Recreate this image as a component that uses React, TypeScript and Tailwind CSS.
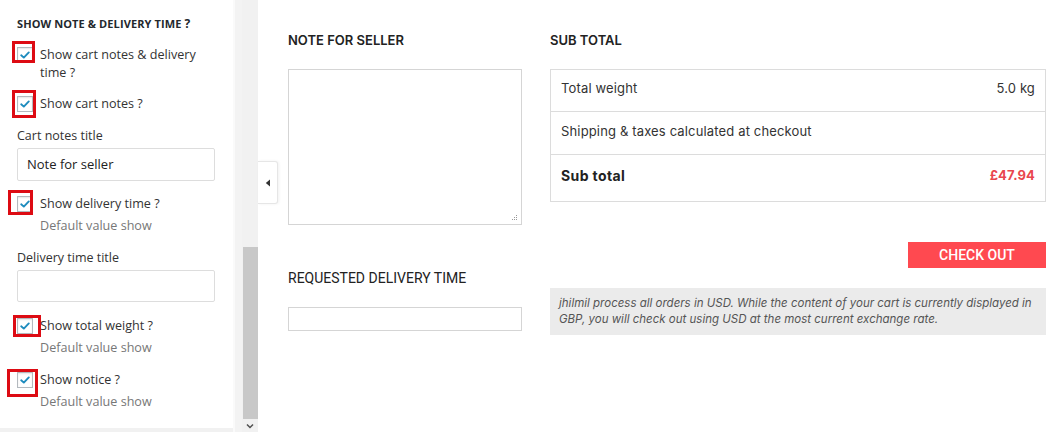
import React from "react";

function Check() {
  return (
    <span className="flex h-[16px] w-[16px] shrink-0 items-center justify-center border border-[#b4b9be] bg-white shadow-[inset_0_1px_2px_rgba(0,0,0,0.1)]">
      <svg width="12" height="12" viewBox="0 0 12 12">
        <path d="M2.2 6.3 L4.8 8.6 L9.8 3.4" fill="none" stroke="#1e8cbe" strokeWidth="1.9" strokeLinecap="round" strokeLinejoin="round" />
      </svg>
    </span>
  );
}

type RowProps = {
  label: React.ReactNode;
  sub?: string;
  box: string;
};

function CheckRow({ label, sub, box }: RowProps) {
  return (
    <div className="relative flex items-start gap-[7px]">
      <div className="mt-[1px]">
        <Check />
      </div>
      <div className="text-[12.6px] leading-[18px] text-[#333]">
        <div>{label}</div>
        {sub && <div className="mt-[4px] text-[#777]">{sub}</div>}
      </div>
      <div className={"pointer-events-none absolute border-[3px] border-[#dd0b13] " + box} />
    </div>
  );
}

export default function App() {
  return (
    <div className="flex h-[432px] w-[1060px] overflow-hidden bg-white" style={{ fontFamily: '"Open Sans", sans-serif' }}>
      {/* Left settings panel */}
      <div className="flex h-full w-[233px] shrink-0 flex-col bg-[#f1f1f1]">
        <div className="h-[428px] w-full bg-white pl-[17px] pr-[18px] pt-[16px]">
          <div className="text-[11px] font-bold uppercase leading-[16px] tracking-[0.1px] text-[#23282d]">
            Show note &amp; delivery time <span className="text-[12px]">?</span>
          </div>
          <div className="mt-[14px]">
            <CheckRow label={<>Show cart notes &amp; delivery<br />time ?</>} box="left-[-5px] top-[-5px] h-[22px] w-[23px]" />
          </div>
          <div className="mt-[13px]">
            <CheckRow label="Show cart notes ?" box="left-[-5px] top-[-5px] h-[28px] w-[24px]" />
          </div>
          <div className="mt-[14px] text-[12.5px] leading-[18px] text-[#333]">Cart notes title</div>
          <div className="mt-[3px] flex h-[33px] items-center rounded-[2px] border border-[#ddd] px-[9px] text-[13px] text-[#222]">
            Note for seller
          </div>
          <div className="mt-[14px]">
            <CheckRow label="Show delivery time ?" sub="Default value show" box="left-[-9px] top-[-5px] h-[25px] w-[25px]" />
          </div>
          <div className="mt-[14px] text-[12.5px] leading-[18px] text-[#333]">Delivery time title</div>
          <div className="mt-[3px] h-[32px] rounded-[2px] border border-[#ddd]" />
          <div className="mt-[15px]">
            <CheckRow label="Show total weight ?" sub="Default value show" box="left-[-4px] top-[-2px] h-[22px] w-[28px]" />
          </div>
          <div className="mt-[14px]">
            <CheckRow label="Show notice ?" sub="Default value show" box="left-[-10px] top-[-2px] h-[28px] w-[31px]" />
          </div>
        </div>
      </div>

      {/* gutter */}
      <div className="h-full w-[9px] shrink-0 border-l-[2px] border-[#fafafa] bg-[#f3f3f3]" />

      {/* scrollbar */}
      <div className="relative flex h-full w-[16px] shrink-0 flex-col bg-[#f1f1f1]">
        <div className="h-[247px]" />
        <div className="ml-[1px] h-[172px] w-[15px] bg-[#c8c8c8]" />
        <div className="flex flex-1 items-center justify-center">
          <svg width="8" height="6" viewBox="0 0 8 6">
            <path d="M1 1.5 L4 4.5 L7 1.5" fill="none" stroke="#505050" strokeWidth="1.5" />
          </svg>
        </div>
      </div>

      {/* main preview */}
      <div className="relative flex flex-1 gap-[28px] bg-white pl-[30px] pr-[14px] pt-[31px]" style={{ fontFamily: 'Inter, sans-serif' }}>
        {/* collapse tab */}
        <div className="absolute left-0 top-[161px] flex h-[43px] w-[20px] items-center justify-center rounded-r-[3px] border border-l-0 border-[#e6e6e6] bg-white shadow-[1px_0_3px_rgba(0,0,0,0.06)]">
          <svg width="6" height="8" viewBox="0 0 6 8">
            <path d="M5 0.5 L0.8 4 L5 7.5 Z" fill="#333" />
          </svg>
        </div>

        {/* left column */}
        <div className="flex w-[234px] shrink-0 flex-col">
          <div className="text-[13px] font-semibold uppercase leading-[18px] text-[#222]">Note for seller</div>
          <div className="relative mt-[20px] h-[156px] border border-[#d5d5d5]">
            <svg className="absolute bottom-[3px] right-[3px]" width="7" height="7" viewBox="0 0 7 7">
              <rect x="5" y="1" width="1" height="1" fill="#999" />
              <rect x="3" y="3" width="1" height="1" fill="#999" />
              <rect x="5" y="3" width="1" height="1" fill="#999" />
              <rect x="1" y="5" width="1" height="1" fill="#999" />
              <rect x="3" y="5" width="1" height="1" fill="#999" />
              <rect x="5" y="5" width="1" height="1" fill="#999" />
            </svg>
          </div>
          <div className="mt-[44px] text-[14px] uppercase leading-[18px] text-[#222]" style={{ fontFamily: 'Roboto, sans-serif' }}>
            Requested delivery time
          </div>
          <div className="mt-[20px] h-[24px] border border-[#d5d5d5]" />
        </div>

        {/* right column */}
        <div className="flex w-[496px] shrink-0 flex-col">
          <div className="text-[13px] font-semibold uppercase leading-[18px] text-[#222]">Sub total</div>
          <div className="mt-[20px] border border-[#dcdcdc] text-[13px] tracking-[0.15px] text-[#333]">
            <div className="flex h-[42px] items-center justify-between border-b border-[#dcdcdc] px-[10px] pb-[3px]">
              <span>Total weight</span>
              <span>5.0 kg</span>
            </div>
            <div className="flex h-[43px] items-center border-b border-[#dcdcdc] px-[10px] pb-[3px]">
              <span>Shipping &amp; taxes calculated at checkout</span>
            </div>
            <div className="flex h-[46px] items-center justify-between px-[10px] pb-[5px] font-bold">
              <span className="text-[14px] tracking-[0.4px] text-[#222]">Sub total</span>
              <span className="text-[#e9464e]">£47.94</span>
            </div>
          </div>
          <div className="mt-[40px] flex justify-end">
            <div className="flex h-[26px] w-[138px] items-center justify-center bg-[#ff4950] text-[14px] font-medium uppercase text-white" style={{ fontFamily: 'Roboto, sans-serif' }}>
              Check out
            </div>
          </div>
          <div className="mt-[20px] h-[47px] bg-[#ebebeb] pl-[9px] pr-[4px] pt-[7px] text-[11.5px] italic leading-[16px] text-[#555]">
            jhilmil process all orders in USD. While the content of your cart is currently displayed in GBP, you will check out using USD at the most current exchange rate.
          </div>
        </div>
      </div>
    </div>
  );
}
